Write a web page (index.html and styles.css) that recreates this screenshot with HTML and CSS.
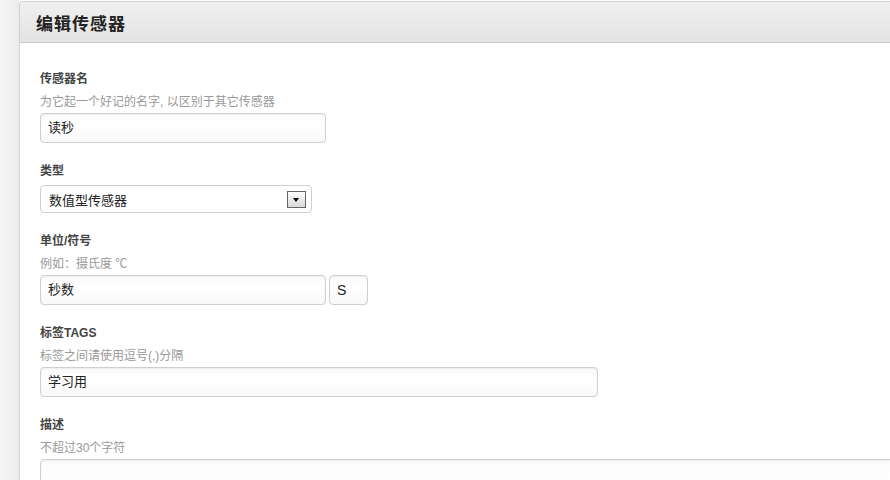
FILE: index.html
```html
<!DOCTYPE html>
<html lang="zh-CN">
<head>
<meta charset="utf-8">
<title>编辑传感器</title>
<link rel="stylesheet" href="styles.css">
</head>
<body>
<div class="gutter"></div>
<div class="panel">
  <div class="panel-head">
    <h2 class="panel-title">编辑传感器</h2>
  </div>
  <form class="panel-body">
    <div class="field">
      <div class="field-label">传感器名</div>
      <div class="field-hint">为它起一个好记的名字, 以区别于其它传感器</div>
      <div class="input input-name">读秒</div>
    </div>
    <div class="field">
      <div class="field-label">类型</div>
      <div class="select">
        <span class="select-value">数值型传感器</span>
        <span class="select-arrow"></span>
      </div>
    </div>
    <div class="field">
      <div class="field-label">单位/符号</div>
      <div class="field-hint">例如：摄氏度 ℃</div>
      <div class="input-row">
        <div class="input input-name">秒数</div>
        <div class="input input-symbol">S</div>
      </div>
    </div>
    <div class="field">
      <div class="field-label">标签TAGS</div>
      <div class="field-hint">标签之间请使用逗号(,)分隔</div>
      <div class="input input-tags">学习用</div>
    </div>
    <div class="field">
      <div class="field-label">描述</div>
      <div class="field-hint">不超过30个字符</div>
      <div class="input textarea"></div>
    </div>
  </form>
</div>
</body>
</html>
```

FILE: styles.css
```css
html, body {
  margin: 0;
  height: 100%;
  overflow: hidden;
}

body {
  display: flex;
  background: #fff;
  font-family: "Liberation Sans", "Noto Sans CJK SC", sans-serif;
  font-size: 12px;
  color: #333;
}

.gutter {
  width: 19px;
  flex: none;
  background: linear-gradient(to right, #f6f6f6, #ececec);
}

.panel {
  flex: 1;
  margin-top: 1px;
  border-left: 1px solid #d2d2d2;
  border-top: 1px solid #d2d2d2;
  border-top-left-radius: 4px;
  background: #fff;
  min-width: 0;
}

.panel-head {
  height: 40px;
  display: flex;
  align-items: center;
  padding-left: 16px;
  background: linear-gradient(to bottom, #f0f0f0, #e3e3e3);
  border-bottom: 1px solid #c9c9c9;
  border-top-left-radius: 3px;
}

.panel-title {
  margin: 0;
  font-size: 17px;
  font-weight: bold;
  color: #222;
  letter-spacing: 1px;
}

.panel-body {
  padding: 27px 0 0 20px;
}

.field {
  margin-bottom: 19px;
}

.field-label {
  font-weight: bold;
  color: #444;
  line-height: 18px;
  margin-bottom: 5px;
}

.field-hint {
  color: #999;
  line-height: 18px;
  margin-bottom: 2px;
}

.input {
  box-sizing: border-box;
  height: 30px;
  border: 1px solid #cfcfcf;
  border-radius: 4px;
  background: linear-gradient(to bottom, #fbfbfb, #fff 40%, #f8f8f8);
  box-shadow: inset 0 1px 2px rgba(0, 0, 0, 0.06);
  padding: 0 7px;
  line-height: 28px;
  font-size: 13px;
  color: #222;
}

.input-name {
  width: 286px;
}

.input-row {
  display: flex;
  gap: 3px;
}

.input-symbol {
  width: 39px;
  font-family: "Liberation Sans", sans-serif;
  font-size: 14px;
}

.input-tags {
  width: 558px;
}

.textarea {
  width: 900px;
  height: 60px;
}

.select {
  box-sizing: border-box;
  width: 272px;
  height: 28px;
  margin-top: 1px;
  border: 1px solid #cfcfcf;
  border-radius: 4px;
  background: #fff;
  display: flex;
  align-items: center;
  justify-content: space-between;
  padding: 0 5px 0 8px;
  font-size: 13px;
  color: #222;
}

.select-arrow {
  box-sizing: border-box;
  width: 19px;
  height: 17px;
  border: 1px solid #666;
  background: linear-gradient(to bottom, #fdfdfd, #d8d8d8);
  position: relative;
}

.select-arrow::after {
  content: "";
  position: absolute;
  left: 5px;
  top: 6px;
  border-left: 3.5px solid transparent;
  border-right: 3.5px solid transparent;
  border-top: 4px solid #000;
}
```
